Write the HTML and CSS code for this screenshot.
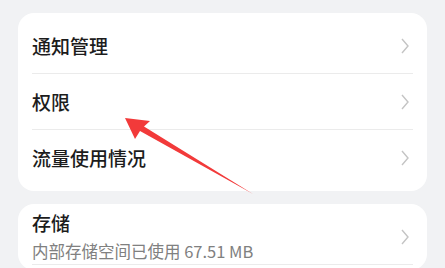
FILE: index.html
```html
<!DOCTYPE html>
<html lang="zh-CN">
<head>
<meta charset="utf-8">
<link rel="stylesheet" href="styles.css">
</head>
<body>
<div class="page">
  <div class="card">
    <div class="row"><span class="title">通知管理</span><svg class="chev" width="8" height="16" viewBox="0 0 8 16"><polyline points="1,1 7,8 1,15" fill="none" stroke="#c4c4c4" stroke-width="1.4"/></svg></div>
    <div class="row"><span class="title">权限</span><svg class="chev" width="8" height="16" viewBox="0 0 8 16"><polyline points="1,1 7,8 1,15" fill="none" stroke="#c4c4c4" stroke-width="1.4"/></svg></div>
    <div class="row last"><span class="title">流量使用情况</span><svg class="chev" width="8" height="16" viewBox="0 0 8 16"><polyline points="1,1 7,8 1,15" fill="none" stroke="#c4c4c4" stroke-width="1.4"/></svg></div>
  </div>
  <div class="card">
    <div class="row tall">
      <div class="texts">
        <span class="title">存储</span>
        <span class="sub">内部存储空间已使用 67.51 MB</span>
      </div>
      <svg class="chev" width="8" height="16" viewBox="0 0 8 16"><polyline points="1,1 7,8 1,15" fill="none" stroke="#c4c4c4" stroke-width="1.4"/></svg>
    </div>
  </div>
  <svg class="arrow" width="445" height="268" viewBox="0 0 445 268">
    <polygon points="125,118 150,121 144,126.5 253,194 140,131 135,139" fill="#f23a3a"/>
  </svg>
</div>
</body>
</html>
```

FILE: styles.css
```css
html, body {
  margin: 0;
  padding: 0;
  background: #f1f2f4;
  width: 445px;
  height: 268px;
  overflow: hidden;
}
.page {
  position: relative;
  width: 445px;
  height: 268px;
  padding: 13px 18px 0 18px;
  box-sizing: border-box;
  display: flex;
  flex-direction: column;
  gap: 13px;
  font-family: "Noto Sans CJK SC", "Noto Sans", sans-serif;
}
.card {
  background: #ffffff;
  border-radius: 16px;
  padding: 5px 14px 5px 14px;
}
.row {
  height: 56px;
  display: flex;
  align-items: center;
  justify-content: space-between;
  border-bottom: 1px solid #ebebeb;
  box-sizing: border-box;
}
.row.last {
  border-bottom: none;
}
.title {
  font-size: 19px;
  font-weight: 500;
  color: #1c1c1c;
  line-height: 24px;
}
.texts {
  display: flex;
  flex-direction: column;
}
.row.tall {
  align-items: center;
}
.sub {
  font-size: 16.5px;
  color: #808080;
  line-height: 24px;
  margin-top: 4px;
}
.chev {
  display: block;
  margin-right: 4px;
}
.arrow {
  position: absolute;
  left: 0;
  top: 0;
}
```
